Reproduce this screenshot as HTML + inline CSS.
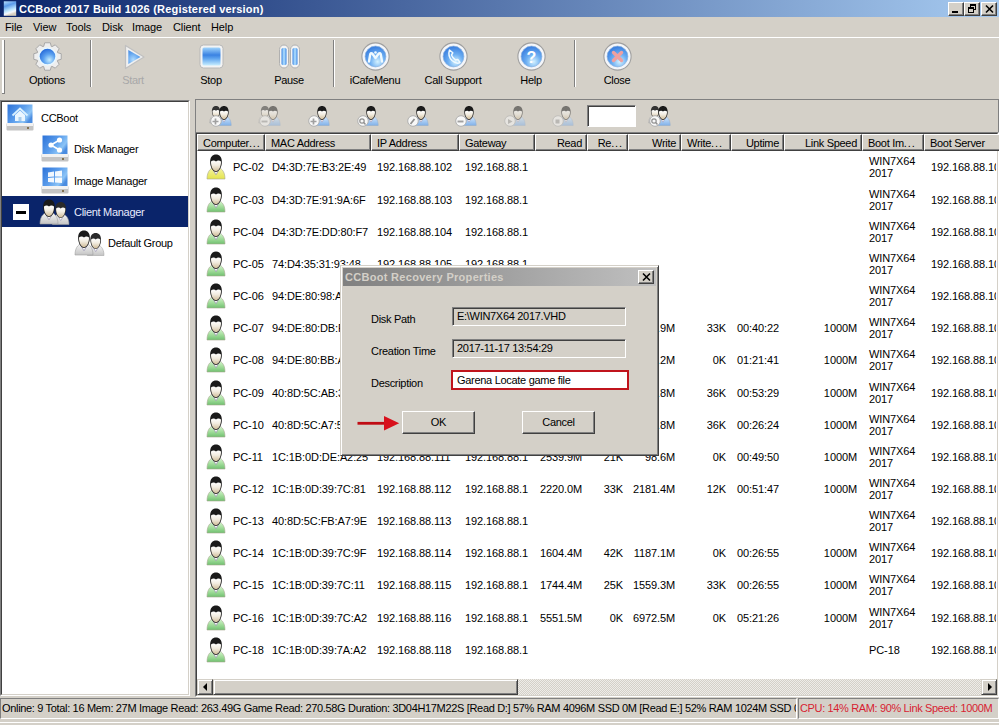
<!DOCTYPE html><html><head><meta charset="utf-8"><style>
*{margin:0;padding:0;box-sizing:border-box}
html,body{width:999px;height:725px;overflow:hidden;background:#D4D0C8;font-family:"Liberation Sans",sans-serif;font-size:11px;color:#000}
.a{position:absolute}
.t{position:absolute;white-space:nowrap;line-height:13px;letter-spacing:-0.3px}
.n{letter-spacing:-0.1px}
.r{text-align:right}
svg{position:absolute;overflow:visible}
.rz{border-top:1px solid #fff;border-left:1px solid #fff;border-right:1px solid #404040;border-bottom:1px solid #404040;box-shadow:inset -1px -1px 0 #808080;background:#D4D0C8}
</style></head><body>
<svg width="0" height="0" style="position:absolute"><defs>
<linearGradient id="gBlue" x1="0" y1="0" x2="0" y2="1"><stop offset="0" stop-color="#A0D4FC"/><stop offset="0.42" stop-color="#3A82E2"/><stop offset="0.6" stop-color="#5CA2EE"/><stop offset="1" stop-color="#C8EEFF"/></linearGradient>
<linearGradient id="gPill" x1="0" y1="0" x2="1" y2="0"><stop offset="0" stop-color="#3C86E4"/><stop offset="0.5" stop-color="#B8E4FF"/><stop offset="1" stop-color="#3C86E4"/></linearGradient>
<radialGradient id="gSphere" cx="0.62" cy="0.72" r="0.75"><stop offset="0" stop-color="#C4ECFF"/><stop offset="0.5" stop-color="#5CA2F0"/><stop offset="1" stop-color="#2468D8"/></radialGradient>
<radialGradient id="gSphereD" cx="0.4" cy="0.7" r="0.8"><stop offset="0" stop-color="#B0DCFF"/><stop offset="0.6" stop-color="#62A4EE"/><stop offset="1" stop-color="#4488E0"/></radialGradient>
<linearGradient id="gFace" x1="0" y1="0" x2="0" y2="1"><stop offset="0" stop-color="#FFFFFF"/><stop offset="0.45" stop-color="#F2ECE0"/><stop offset="1" stop-color="#D0BC98"/></linearGradient>
<linearGradient id="gYel" x1="0" y1="0" x2="0" y2="1"><stop offset="0" stop-color="#F4F4A8"/><stop offset="1" stop-color="#E4E44C"/></linearGradient>
<linearGradient id="gGrn" x1="0" y1="0" x2="0" y2="1"><stop offset="0" stop-color="#E0F6DC"/><stop offset="0.5" stop-color="#A8E0A0"/><stop offset="1" stop-color="#70C070"/></linearGradient>
<linearGradient id="gGry" x1="0" y1="0" x2="0" y2="1"><stop offset="0" stop-color="#F8F8F8"/><stop offset="1" stop-color="#C4C4C4"/></linearGradient>
<linearGradient id="gBlu2" x1="0" y1="0" x2="0" y2="1"><stop offset="0" stop-color="#D8ECFF"/><stop offset="1" stop-color="#80B0E8"/></linearGradient>
<linearGradient id="gDisk" x1="0" y1="0" x2="1" y2="0.6"><stop offset="0" stop-color="#2C72D8"/><stop offset="0.55" stop-color="#5C9EEC"/><stop offset="0.85" stop-color="#8CC4F6"/><stop offset="1" stop-color="#4A8CE0"/></linearGradient>
<linearGradient id="gTitleIco" x1="0" y1="0" x2="0.3" y2="1"><stop offset="0" stop-color="#B8E0FF"/><stop offset="0.35" stop-color="#5A9AEA"/><stop offset="0.7" stop-color="#C0E8FF"/><stop offset="0.85" stop-color="#F4F8FF"/><stop offset="1" stop-color="#D8D0C0"/></linearGradient>
<radialGradient id="gSphere2" cx="0.6" cy="0.75" r="0.8"><stop offset="0" stop-color="#D4F2FF"/><stop offset="0.45" stop-color="#6CAEF2"/><stop offset="1" stop-color="#3076DC"/></radialGradient>
</defs></svg>
<div class="a" style="left:0;top:0;width:999px;height:17px;background:linear-gradient(90deg,#0A246A 0%,#A6CAF0 100%)"></div>
<svg style="left:3px;top:1px" width="14" height="16" viewBox="0 0 14 16"><rect x="0.8" y="0.3" width="12.4" height="14.5" fill="url(#gTitleIco)"/></svg>
<div class="t" style="left:19px;top:3px;color:#fff;font-weight:bold;letter-spacing:0.2px">CCBoot 2017 Build 1026 (Registered version)</div>
<div class="a rz" style="left:948px;top:2px;width:16px;height:14px"><div class="a" style="left:3px;top:8px;width:6px;height:2px;background:#000"></div></div>
<div class="a rz" style="left:964px;top:2px;width:16px;height:14px"><div class="a" style="left:5px;top:1px;width:6px;height:6px;border:1px solid #000;border-top-width:2px"></div><div class="a" style="left:3px;top:4px;width:6px;height:6px;border:1px solid #000;border-top-width:2px;background:#D4D0C8"></div></div>
<div class="a rz" style="left:981px;top:2px;width:16px;height:14px"><svg style="left:3px;top:2px" width="9" height="8" viewBox="0 0 9 8"><path d="M1 0.5L8 7.5M8 0.5L1 7.5" stroke="#000" stroke-width="1.6"/></svg></div>
<div class="t" style="left:5px;top:21px;letter-spacing:-0.1px">File</div>
<div class="t" style="left:33px;top:21px;letter-spacing:-0.1px">View</div>
<div class="t" style="left:66px;top:21px;letter-spacing:-0.1px">Tools</div>
<div class="t" style="left:102px;top:21px;letter-spacing:-0.1px">Disk</div>
<div class="t" style="left:132px;top:21px;letter-spacing:-0.1px">Image</div>
<div class="t" style="left:173px;top:21px;letter-spacing:-0.1px">Client</div>
<div class="t" style="left:211px;top:21px;letter-spacing:-0.1px">Help</div>
<div class="a" style="left:0;top:37px;width:999px;height:1px;background:#fff"></div>
<div class="a" style="left:2px;top:40px;width:2px;height:54px;background:#fff"></div><div class="a" style="left:4px;top:40px;width:1px;height:54px;background:#808080"></div><div class="a" style="left:2px;top:93px;width:3px;height:1px;background:#808080"></div>
<div class="a" style="left:90px;top:40px;width:1px;height:47px;background:#808080"></div><div class="a" style="left:91px;top:40px;width:1px;height:47px;background:#fff"></div>
<div class="a" style="left:333px;top:40px;width:1px;height:47px;background:#808080"></div><div class="a" style="left:334px;top:40px;width:1px;height:47px;background:#fff"></div>
<div class="a" style="left:574px;top:40px;width:1px;height:47px;background:#808080"></div><div class="a" style="left:575px;top:40px;width:1px;height:47px;background:#fff"></div>
<div class="t" style="left:-3px;width:100px;text-align:center;top:74px;color:#000">Options</div>
<div class="t" style="left:83px;width:100px;text-align:center;top:74px;color:#A8A8A8">Start</div>
<div class="t" style="left:161px;width:100px;text-align:center;top:74px;color:#000">Stop</div>
<div class="t" style="left:239px;width:100px;text-align:center;top:74px;color:#000">Pause</div>
<div class="t" style="left:325px;width:100px;text-align:center;top:74px;color:#000">iCafeMenu</div>
<div class="t" style="left:403px;width:100px;text-align:center;top:74px;color:#000">Call Support</div>
<div class="t" style="left:481px;width:100px;text-align:center;top:74px;color:#000">Help</div>
<div class="t" style="left:567px;width:100px;text-align:center;top:74px;color:#000">Close</div>
<svg style="left:0;top:0" width="999" height="100" viewBox="0 0 999 100"><polygon points="43.70,46.39 44.72,42.78 50.28,42.78 51.30,46.39 51.96,46.66 55.24,44.83 59.17,48.76 57.34,52.04 57.61,52.70 61.22,53.72 61.22,59.28 57.61,60.30 57.34,60.96 59.17,64.24 55.24,68.17 51.96,66.34 51.30,66.61 50.28,70.22 44.72,70.22 43.70,66.61 43.04,66.34 39.76,68.17 35.83,64.24 37.66,60.96 37.39,60.30 33.78,59.28 33.78,53.72 37.39,52.70 37.66,52.04 35.83,48.76 39.76,44.83 43.04,46.66" fill="#EEEEEE" stroke="#A8A8A8" stroke-width="1" stroke-linejoin="round"/><circle cx="47.5" cy="56.5" r="9.3" fill="#E8F8FF"/><circle cx="47.5" cy="56.5" r="7.8" fill="url(#gSphere)"/><path d="M125.5 45.5 L144 57 L125.5 68.5 Z" fill="#F0F0F0" stroke="#C0C0C0" stroke-width="1.3" stroke-linejoin="round"/><path d="M128.3 50 L140.5 57 L128.3 64 Z" fill="url(#gSphereD)"/><rect x="200" y="45" width="23" height="23" rx="3.5" fill="#F4F4F4" stroke="#B8B8B8" stroke-width="1"/><rect x="202.5" y="47.5" width="18" height="18" rx="1.5" fill="url(#gBlue)"/><rect x="279.5" y="45" width="9" height="23" rx="4.5" fill="#F4F4F4" stroke="#B0B0B0" stroke-width="1"/><rect x="281.5" y="48" width="5" height="17" rx="1.5" fill="url(#gPill)"/><rect x="290.5" y="45" width="9" height="23" rx="4.5" fill="#F4F4F4" stroke="#B0B0B0" stroke-width="1"/><rect x="292.5" y="48" width="5" height="17" rx="1.5" fill="url(#gPill)"/><circle cx="375.5" cy="56.5" r="13.6" fill="#F4F6FA" stroke="#A0A0A0" stroke-width="1.1"/><circle cx="375.5" cy="56.5" r="10.4" fill="url(#gSphere2)" stroke="#8AB0DC" stroke-width="0.7"/><circle cx="453.5" cy="56.5" r="13.6" fill="#F4F6FA" stroke="#A0A0A0" stroke-width="1.1"/><circle cx="453.5" cy="56.5" r="10.4" fill="url(#gSphere2)" stroke="#8AB0DC" stroke-width="0.7"/><circle cx="531.5" cy="56.5" r="13.6" fill="#F4F6FA" stroke="#A0A0A0" stroke-width="1.1"/><circle cx="531.5" cy="56.5" r="10.4" fill="url(#gSphere2)" stroke="#8AB0DC" stroke-width="0.7"/><circle cx="617.5" cy="56.5" r="13.6" fill="#F4F6FA" stroke="#A0A0A0" stroke-width="1.1"/><circle cx="617.5" cy="56.5" r="10.4" fill="url(#gSphere2)" stroke="#8AB0DC" stroke-width="0.7"/><path d="M369 61.5 L370.3 54 Q371.2 52.3 372.6 54 L375.5 58 L378.4 54 Q379.8 52.3 380.7 54 L382 61.5" fill="none" stroke="#F0FAFF" stroke-width="2.4" stroke-linecap="round" stroke-linejoin="round"/><circle cx="375.5" cy="52.5" r="1.3" fill="#F0FAFF"/><path d="M449.5 50 Q447.5 56 452 60.5 Q456.5 64.5 460 62.5 L457.8 59.5 L455.5 60 Q452.5 58 451.5 55 L452.8 52.8 Z" fill="none" stroke="#F0FAFF" stroke-width="1.5" stroke-linejoin="round"/><text x="531.5" y="62.5" font-family="Liberation Sans" font-weight="bold" font-size="16" fill="#fff" text-anchor="middle">?</text><path d="M613.5 52.5 L621.5 60.5 M621.5 52.5 L613.5 60.5" stroke="#F0A0A0" stroke-width="3.4" stroke-linecap="round"/></svg>
<div class="a" style="left:0;top:100px;width:190px;height:596px;background:#fff;border-top:1px solid #808080;border-left:1px solid #808080;border-right:1px solid #fff;border-bottom:1px solid #fff"></div>
<div class="a" style="left:1px;top:101px;width:188px;height:594px;border-top:1px solid #404040;border-left:1px solid #404040;border-right:1px solid #D4D0C8;border-bottom:1px solid #D4D0C8"></div>
<div class="a" style="left:2px;top:196px;width:186px;height:31px;background:#0A246A"></div>
<div class="a" style="left:13px;top:204px;width:16px;height:16px;background:#fff"></div><div class="a" style="left:16px;top:211px;width:10px;height:3px;background:#000"></div>
<div class="t" style="left:41px;top:112px;color:#000">CCBoot</div>
<div class="t" style="left:74px;top:143px;color:#000">Disk Manager</div>
<div class="t" style="left:74px;top:175px;color:#000">Image Manager</div>
<div class="t" style="left:74px;top:206px;color:#E8ECFF">Client Manager</div>
<div class="t" style="left:108px;top:237px;color:#000">Default Group</div>
<svg style="left:6px;top:103px" width="28" height="28" viewBox="0 0 28 28"><path d="M1.5 1.5 H26.5 V21 H1.5 Z" fill="url(#gDisk)"/><rect x="0.5" y="20" width="27" height="7.5" rx="1" fill="#C4C4C4"/><rect x="1" y="20" width="26" height="3" fill="#F2F2F2"/><rect x="21" y="24" width="2" height="2" fill="#807050"/><path d="M9 18 L9 12 L14 7.5 L19 12 L19 18 Z" fill="#EAF6FF"/><path d="M6.5 12.5 L14 5.5 L21.5 12.5" stroke="#D8F0FF" stroke-width="1.8" fill="none"/><rect x="12.5" y="14" width="3" height="4" fill="#A8CCEC"/></svg>
<svg style="left:41px;top:134px" width="28" height="28" viewBox="0 0 28 28"><path d="M1.5 1.5 H26.5 V21 H1.5 Z" fill="url(#gDisk)"/><rect x="0.5" y="20" width="27" height="7.5" rx="1" fill="#C4C4C4"/><rect x="1" y="20" width="26" height="3" fill="#F2F2F2"/><rect x="21" y="24" width="2" height="2" fill="#807050"/><circle cx="10" cy="11" r="2.6" fill="#fff"/><circle cx="18.5" cy="6" r="2.6" fill="#fff"/><circle cx="18.5" cy="16" r="2.6" fill="#fff"/><path d="M10 11 L18.5 6 M10 11 L18.5 16" stroke="#fff" stroke-width="1.6"/></svg>
<svg style="left:41px;top:166px" width="28" height="28" viewBox="0 0 28 28"><path d="M1.5 1.5 H26.5 V21 H1.5 Z" fill="url(#gDisk)"/><rect x="0.5" y="20" width="27" height="7.5" rx="1" fill="#C4C4C4"/><rect x="1" y="20" width="26" height="3" fill="#F2F2F2"/><rect x="21" y="24" width="2" height="2" fill="#807050"/><path d="M7 6.5 L13 5.5 L13 10.5 L7 11 Z M14 5.5 L21 4.5 L21 10.5 L14 10.5 Z M7 12 L13 11.5 L13 16.5 L7 16 Z M14 11.5 L21 11.5 L21 17 L14 16.5 Z" fill="#fff" opacity="0.92"/></svg>
<svg style="left:39px;top:199px" width="32" height="26" viewBox="0 0 32 26"><g transform="translate(12.5,2.5) scale(0.92)"><path d="M1 25 C1 17 5 13.2 10 13.2 C15 13.2 19 17 19 25 Z" fill="url(#gGry)" stroke="#A0A0A0" stroke-width="0.6"/><path d="M5.8 13.8 L10 20.8 L14.2 13.8 Z" fill="#FAFAFA" stroke="#9890B0" stroke-width="0.7"/><path d="M4.2 9 C3.8 3 6.7 0.6 10 0.6 C13.3 0.6 16.2 3 15.8 9 C15.6 13.5 12.8 18 10 18 C7.2 18 4.4 13.5 4.2 9 Z" fill="#2A2A2A"/><path d="M5 7.6 C6.4 6.2 8.6 6 10 7.6 C11.4 6 13.6 6.2 15 7.6 C15.2 12.5 12.8 17.3 10 17.3 C7.2 17.3 4.8 12.5 5 7.6 Z" fill="url(#gFace)"/></g><g><path d="M1 25 C1 17 5 13.2 10 13.2 C15 13.2 19 17 19 25 Z" fill="url(#gGry)" stroke="#A0A0A0" stroke-width="0.6"/><path d="M5.8 13.8 L10 20.8 L14.2 13.8 Z" fill="#FAFAFA" stroke="#9890B0" stroke-width="0.7"/><path d="M4.2 9 C3.8 3 6.7 0.6 10 0.6 C13.3 0.6 16.2 3 15.8 9 C15.6 13.5 12.8 18 10 18 C7.2 18 4.4 13.5 4.2 9 Z" fill="#1A1A1A"/><path d="M5 7.6 C6.4 6.2 8.6 6 10 7.6 C11.4 6 13.6 6.2 15 7.6 C15.2 12.5 12.8 17.3 10 17.3 C7.2 17.3 4.8 12.5 5 7.6 Z" fill="url(#gFace)"/></g></svg>
<svg style="left:74px;top:230px" width="32" height="26" viewBox="0 0 32 26"><g transform="translate(12.5,2.5) scale(0.92)"><path d="M1 25 C1 17 5 13.2 10 13.2 C15 13.2 19 17 19 25 Z" fill="url(#gGry)" stroke="#A0A0A0" stroke-width="0.6"/><path d="M5.8 13.8 L10 20.8 L14.2 13.8 Z" fill="#FAFAFA" stroke="#9890B0" stroke-width="0.7"/><path d="M4.2 9 C3.8 3 6.7 0.6 10 0.6 C13.3 0.6 16.2 3 15.8 9 C15.6 13.5 12.8 18 10 18 C7.2 18 4.4 13.5 4.2 9 Z" fill="#2A2A2A"/><path d="M5 7.6 C6.4 6.2 8.6 6 10 7.6 C11.4 6 13.6 6.2 15 7.6 C15.2 12.5 12.8 17.3 10 17.3 C7.2 17.3 4.8 12.5 5 7.6 Z" fill="url(#gFace)"/></g><g><path d="M1 25 C1 17 5 13.2 10 13.2 C15 13.2 19 17 19 25 Z" fill="url(#gGry)" stroke="#A0A0A0" stroke-width="0.6"/><path d="M5.8 13.8 L10 20.8 L14.2 13.8 Z" fill="#FAFAFA" stroke="#9890B0" stroke-width="0.7"/><path d="M4.2 9 C3.8 3 6.7 0.6 10 0.6 C13.3 0.6 16.2 3 15.8 9 C15.6 13.5 12.8 18 10 18 C7.2 18 4.4 13.5 4.2 9 Z" fill="#1A1A1A"/><path d="M5 7.6 C6.4 6.2 8.6 6 10 7.6 C11.4 6 13.6 6.2 15 7.6 C15.2 12.5 12.8 17.3 10 17.3 C7.2 17.3 4.8 12.5 5 7.6 Z" fill="url(#gFace)"/></g></svg>
<div class="a" style="left:195px;top:99px;width:804px;height:34px;border-top:1px solid #808080;border-left:1px solid #808080"></div>
<div class="a" style="left:998px;top:99px;width:1px;height:34px;background:#808080"></div>
<div class="a" style="left:195px;top:132px;width:804px;height:565px;background:#fff;border-top:1px solid #808080;border-left:1px solid #808080;border-right:1px solid #fff;border-bottom:1px solid #fff"></div>
<div class="a" style="left:196px;top:133px;width:802px;height:563px;border-top:1px solid #404040;border-left:1px solid #404040;border-right:1px solid #D4D0C8;border-bottom:1px solid #D4D0C8"></div>
<div class="a" style="left:587px;top:105px;width:49px;height:22px;background:#fff;border-top:1px solid #808080;border-left:1px solid #808080;border-right:1px solid #fff;border-bottom:1px solid #fff;box-shadow:inset 1px 1px 0 #404040"></div>
<svg style="left:209px;top:104px" width="24" height="24" viewBox="0 0 24 24"><g ><g transform="translate(0,1.5) scale(0.7)"><path d="M1 25 C1 17 5 13.2 10 13.2 C15 13.2 19 17 19 25 Z" fill="url(#gGry)" stroke="#A0A0A0" stroke-width="0.6"/><path d="M5.8 13.8 L10 20.8 L14.2 13.8 Z" fill="#FAFAFA" stroke="#9890B0" stroke-width="0.7"/><path d="M4.2 9 C3.8 3 6.7 0.6 10 0.6 C13.3 0.6 16.2 3 15.8 9 C15.6 13.5 12.8 18 10 18 C7.2 18 4.4 13.5 4.2 9 Z" fill="#333"/><path d="M5 7.6 C6.4 6.2 8.6 6 10 7.6 C11.4 6 13.6 6.2 15 7.6 C15.2 12.5 12.8 17.3 10 17.3 C7.2 17.3 4.8 12.5 5 7.6 Z" fill="url(#gFace)"/></g><g transform="translate(7,1.5) scale(0.8)"><path d="M1 25 C1 17 5 13.2 10 13.2 C15 13.2 19 17 19 25 Z" fill="url(#gBlu2)" stroke="#90A8C8" stroke-width="0.6"/><path d="M5.8 13.8 L10 20.8 L14.2 13.8 Z" fill="#FAFAFA" stroke="#9890B0" stroke-width="0.7"/><path d="M4.2 9 C3.8 3 6.7 0.6 10 0.6 C13.3 0.6 16.2 3 15.8 9 C15.6 13.5 12.8 18 10 18 C7.2 18 4.4 13.5 4.2 9 Z" fill="#1A1A1A"/><path d="M5 7.6 C6.4 6.2 8.6 6 10 7.6 C11.4 6 13.6 6.2 15 7.6 C15.2 12.5 12.8 17.3 10 17.3 C7.2 17.3 4.8 12.5 5 7.6 Z" fill="url(#gFace)"/></g><circle cx="7" cy="17" r="5.3" fill="#F8F8F8" stroke="#B0B0B0" stroke-width="1"/><path d="M6.5 14.5 V20.5 M3.5 17.5 H9.5" stroke="#A0A0A0" stroke-width="1.7"/></g></svg>
<svg style="left:258px;top:104px" width="24" height="24" viewBox="0 0 24 24"><g opacity="0.5"><g transform="translate(0,1.5) scale(0.7)"><path d="M1 25 C1 17 5 13.2 10 13.2 C15 13.2 19 17 19 25 Z" fill="url(#gGry)" stroke="#A0A0A0" stroke-width="0.6"/><path d="M5.8 13.8 L10 20.8 L14.2 13.8 Z" fill="#FAFAFA" stroke="#9890B0" stroke-width="0.7"/><path d="M4.2 9 C3.8 3 6.7 0.6 10 0.6 C13.3 0.6 16.2 3 15.8 9 C15.6 13.5 12.8 18 10 18 C7.2 18 4.4 13.5 4.2 9 Z" fill="#333"/><path d="M5 7.6 C6.4 6.2 8.6 6 10 7.6 C11.4 6 13.6 6.2 15 7.6 C15.2 12.5 12.8 17.3 10 17.3 C7.2 17.3 4.8 12.5 5 7.6 Z" fill="url(#gFace)"/></g><g transform="translate(7,1.5) scale(0.8)"><path d="M1 25 C1 17 5 13.2 10 13.2 C15 13.2 19 17 19 25 Z" fill="url(#gBlu2)" stroke="#90A8C8" stroke-width="0.6"/><path d="M5.8 13.8 L10 20.8 L14.2 13.8 Z" fill="#FAFAFA" stroke="#9890B0" stroke-width="0.7"/><path d="M4.2 9 C3.8 3 6.7 0.6 10 0.6 C13.3 0.6 16.2 3 15.8 9 C15.6 13.5 12.8 18 10 18 C7.2 18 4.4 13.5 4.2 9 Z" fill="#1A1A1A"/><path d="M5 7.6 C6.4 6.2 8.6 6 10 7.6 C11.4 6 13.6 6.2 15 7.6 C15.2 12.5 12.8 17.3 10 17.3 C7.2 17.3 4.8 12.5 5 7.6 Z" fill="url(#gFace)"/></g><circle cx="7" cy="17" r="5.3" fill="#F8F8F8" stroke="#B0B0B0" stroke-width="1"/><path d="M3.5 17.5 H9.5" stroke="#A0A0A0" stroke-width="1.9"/></g></svg>
<svg style="left:307px;top:104px" width="24" height="24" viewBox="0 0 24 24"><g ><g transform="translate(7,1.5) scale(0.8)"><path d="M1 25 C1 17 5 13.2 10 13.2 C15 13.2 19 17 19 25 Z" fill="url(#gBlu2)" stroke="#90A8C8" stroke-width="0.6"/><path d="M5.8 13.8 L10 20.8 L14.2 13.8 Z" fill="#FAFAFA" stroke="#9890B0" stroke-width="0.7"/><path d="M4.2 9 C3.8 3 6.7 0.6 10 0.6 C13.3 0.6 16.2 3 15.8 9 C15.6 13.5 12.8 18 10 18 C7.2 18 4.4 13.5 4.2 9 Z" fill="#1A1A1A"/><path d="M5 7.6 C6.4 6.2 8.6 6 10 7.6 C11.4 6 13.6 6.2 15 7.6 C15.2 12.5 12.8 17.3 10 17.3 C7.2 17.3 4.8 12.5 5 7.6 Z" fill="url(#gFace)"/></g><circle cx="7" cy="17" r="5.3" fill="#F8F8F8" stroke="#B0B0B0" stroke-width="1"/><path d="M6.5 14.5 V20.5 M3.5 17.5 H9.5" stroke="#A0A0A0" stroke-width="1.7"/></g></svg>
<svg style="left:356px;top:104px" width="24" height="24" viewBox="0 0 24 24"><g ><g transform="translate(7,1.5) scale(0.8)"><path d="M1 25 C1 17 5 13.2 10 13.2 C15 13.2 19 17 19 25 Z" fill="url(#gBlu2)" stroke="#90A8C8" stroke-width="0.6"/><path d="M5.8 13.8 L10 20.8 L14.2 13.8 Z" fill="#FAFAFA" stroke="#9890B0" stroke-width="0.7"/><path d="M4.2 9 C3.8 3 6.7 0.6 10 0.6 C13.3 0.6 16.2 3 15.8 9 C15.6 13.5 12.8 18 10 18 C7.2 18 4.4 13.5 4.2 9 Z" fill="#1A1A1A"/><path d="M5 7.6 C6.4 6.2 8.6 6 10 7.6 C11.4 6 13.6 6.2 15 7.6 C15.2 12.5 12.8 17.3 10 17.3 C7.2 17.3 4.8 12.5 5 7.6 Z" fill="url(#gFace)"/></g><circle cx="7" cy="17" r="5.3" fill="#F8F8F8" stroke="#B0B0B0" stroke-width="1"/><circle cx="6" cy="17" r="2.2" fill="none" stroke="#909090" stroke-width="1.2"/><path d="M7.6 18.6 L9.5 20.5" stroke="#909090" stroke-width="1.4"/></g></svg>
<svg style="left:406px;top:104px" width="24" height="24" viewBox="0 0 24 24"><g ><g transform="translate(7,1.5) scale(0.8)"><path d="M1 25 C1 17 5 13.2 10 13.2 C15 13.2 19 17 19 25 Z" fill="url(#gBlu2)" stroke="#90A8C8" stroke-width="0.6"/><path d="M5.8 13.8 L10 20.8 L14.2 13.8 Z" fill="#FAFAFA" stroke="#9890B0" stroke-width="0.7"/><path d="M4.2 9 C3.8 3 6.7 0.6 10 0.6 C13.3 0.6 16.2 3 15.8 9 C15.6 13.5 12.8 18 10 18 C7.2 18 4.4 13.5 4.2 9 Z" fill="#1A1A1A"/><path d="M5 7.6 C6.4 6.2 8.6 6 10 7.6 C11.4 6 13.6 6.2 15 7.6 C15.2 12.5 12.8 17.3 10 17.3 C7.2 17.3 4.8 12.5 5 7.6 Z" fill="url(#gFace)"/></g><circle cx="7" cy="17" r="5.3" fill="#F8F8F8" stroke="#B0B0B0" stroke-width="1"/><path d="M4.5 20 L8.5 15" stroke="#909090" stroke-width="1.8"/></g></svg>
<svg style="left:454px;top:104px" width="24" height="24" viewBox="0 0 24 24"><g ><g transform="translate(7,1.5) scale(0.8)"><path d="M1 25 C1 17 5 13.2 10 13.2 C15 13.2 19 17 19 25 Z" fill="url(#gBlu2)" stroke="#90A8C8" stroke-width="0.6"/><path d="M5.8 13.8 L10 20.8 L14.2 13.8 Z" fill="#FAFAFA" stroke="#9890B0" stroke-width="0.7"/><path d="M4.2 9 C3.8 3 6.7 0.6 10 0.6 C13.3 0.6 16.2 3 15.8 9 C15.6 13.5 12.8 18 10 18 C7.2 18 4.4 13.5 4.2 9 Z" fill="#1A1A1A"/><path d="M5 7.6 C6.4 6.2 8.6 6 10 7.6 C11.4 6 13.6 6.2 15 7.6 C15.2 12.5 12.8 17.3 10 17.3 C7.2 17.3 4.8 12.5 5 7.6 Z" fill="url(#gFace)"/></g><circle cx="7" cy="17" r="5.3" fill="#F8F8F8" stroke="#B0B0B0" stroke-width="1"/><path d="M3.5 17.5 H9.5" stroke="#A0A0A0" stroke-width="1.9"/></g></svg>
<svg style="left:503px;top:104px" width="24" height="24" viewBox="0 0 24 24"><g opacity="0.5"><g transform="translate(7,1.5) scale(0.8)"><path d="M1 25 C1 17 5 13.2 10 13.2 C15 13.2 19 17 19 25 Z" fill="url(#gBlu2)" stroke="#90A8C8" stroke-width="0.6"/><path d="M5.8 13.8 L10 20.8 L14.2 13.8 Z" fill="#FAFAFA" stroke="#9890B0" stroke-width="0.7"/><path d="M4.2 9 C3.8 3 6.7 0.6 10 0.6 C13.3 0.6 16.2 3 15.8 9 C15.6 13.5 12.8 18 10 18 C7.2 18 4.4 13.5 4.2 9 Z" fill="#1A1A1A"/><path d="M5 7.6 C6.4 6.2 8.6 6 10 7.6 C11.4 6 13.6 6.2 15 7.6 C15.2 12.5 12.8 17.3 10 17.3 C7.2 17.3 4.8 12.5 5 7.6 Z" fill="url(#gFace)"/></g><circle cx="7" cy="17" r="5.3" fill="#F8F8F8" stroke="#B0B0B0" stroke-width="1"/><path d="M5 15 L9.5 17.5 L5 20 Z" fill="#A0A0A0"/></g></svg>
<svg style="left:551px;top:104px" width="24" height="24" viewBox="0 0 24 24"><g opacity="0.5"><g transform="translate(7,1.5) scale(0.8)"><path d="M1 25 C1 17 5 13.2 10 13.2 C15 13.2 19 17 19 25 Z" fill="url(#gBlu2)" stroke="#90A8C8" stroke-width="0.6"/><path d="M5.8 13.8 L10 20.8 L14.2 13.8 Z" fill="#FAFAFA" stroke="#9890B0" stroke-width="0.7"/><path d="M4.2 9 C3.8 3 6.7 0.6 10 0.6 C13.3 0.6 16.2 3 15.8 9 C15.6 13.5 12.8 18 10 18 C7.2 18 4.4 13.5 4.2 9 Z" fill="#1A1A1A"/><path d="M5 7.6 C6.4 6.2 8.6 6 10 7.6 C11.4 6 13.6 6.2 15 7.6 C15.2 12.5 12.8 17.3 10 17.3 C7.2 17.3 4.8 12.5 5 7.6 Z" fill="url(#gFace)"/></g><circle cx="7" cy="17" r="5.3" fill="#F8F8F8" stroke="#B0B0B0" stroke-width="1"/><rect x="4.5" y="15.5" width="4" height="4" fill="#A0A0A0"/></g></svg>
<svg style="left:648px;top:104px" width="24" height="24" viewBox="0 0 24 24"><g ><g transform="translate(0,1.5) scale(0.7)"><path d="M1 25 C1 17 5 13.2 10 13.2 C15 13.2 19 17 19 25 Z" fill="url(#gGry)" stroke="#A0A0A0" stroke-width="0.6"/><path d="M5.8 13.8 L10 20.8 L14.2 13.8 Z" fill="#FAFAFA" stroke="#9890B0" stroke-width="0.7"/><path d="M4.2 9 C3.8 3 6.7 0.6 10 0.6 C13.3 0.6 16.2 3 15.8 9 C15.6 13.5 12.8 18 10 18 C7.2 18 4.4 13.5 4.2 9 Z" fill="#333"/><path d="M5 7.6 C6.4 6.2 8.6 6 10 7.6 C11.4 6 13.6 6.2 15 7.6 C15.2 12.5 12.8 17.3 10 17.3 C7.2 17.3 4.8 12.5 5 7.6 Z" fill="url(#gFace)"/></g><g transform="translate(7,1.5) scale(0.8)"><path d="M1 25 C1 17 5 13.2 10 13.2 C15 13.2 19 17 19 25 Z" fill="url(#gBlu2)" stroke="#90A8C8" stroke-width="0.6"/><path d="M5.8 13.8 L10 20.8 L14.2 13.8 Z" fill="#FAFAFA" stroke="#9890B0" stroke-width="0.7"/><path d="M4.2 9 C3.8 3 6.7 0.6 10 0.6 C13.3 0.6 16.2 3 15.8 9 C15.6 13.5 12.8 18 10 18 C7.2 18 4.4 13.5 4.2 9 Z" fill="#1A1A1A"/><path d="M5 7.6 C6.4 6.2 8.6 6 10 7.6 C11.4 6 13.6 6.2 15 7.6 C15.2 12.5 12.8 17.3 10 17.3 C7.2 17.3 4.8 12.5 5 7.6 Z" fill="url(#gFace)"/></g><circle cx="7" cy="17" r="5.3" fill="#F8F8F8" stroke="#B0B0B0" stroke-width="1"/><circle cx="6" cy="17" r="2.2" fill="none" stroke="#909090" stroke-width="1.2"/><path d="M7.6 18.6 L9.5 20.5" stroke="#909090" stroke-width="1.4"/></g></svg>
<div class="a rz" style="left:197px;top:134px;width:68px;height:17px"></div>
<div class="t" style="left:203px;top:137px">Computer<span style="letter-spacing:0.9px">...</span></div>
<div class="a rz" style="left:265px;top:134px;width:106px;height:17px"></div>
<div class="t" style="left:271px;top:137px">MAC Address</div>
<div class="a rz" style="left:371px;top:134px;width:88px;height:17px"></div>
<div class="t" style="left:377px;top:137px">IP Address</div>
<div class="a rz" style="left:459px;top:134px;width:76px;height:17px"></div>
<div class="t" style="left:465px;top:137px">Gateway</div>
<div class="a rz" style="left:535px;top:134px;width:52px;height:17px"></div>
<div class="t r" style="left:535px;width:47px;top:137px">Read</div>
<div class="a rz" style="left:587px;top:134px;width:41px;height:17px"></div>
<div class="t r" style="left:587px;width:36px;top:137px">Re<span style="letter-spacing:0.9px">...</span></div>
<div class="a rz" style="left:628px;top:134px;width:53px;height:17px"></div>
<div class="t r" style="left:628px;width:48px;top:137px">Write</div>
<div class="a rz" style="left:681px;top:134px;width:50px;height:17px"></div>
<div class="t" style="left:687px;top:137px">Write<span style="letter-spacing:0.9px">...</span></div>
<div class="a rz" style="left:731px;top:134px;width:53px;height:17px"></div>
<div class="t r" style="left:731px;width:48px;top:137px">Uptime</div>
<div class="a rz" style="left:784px;top:134px;width:78px;height:17px"></div>
<div class="t r" style="left:784px;width:73px;top:137px">Link Speed</div>
<div class="a rz" style="left:862px;top:134px;width:62px;height:17px"></div>
<div class="t" style="left:868px;top:137px">Boot Im<span style="letter-spacing:0.9px">...</span></div>
<div class="a rz" style="left:924px;top:134px;width:116px;height:17px"></div>
<div class="t" style="left:930px;top:137px">Boot Server</div>
<div class="a" style="left:197px;top:151px;width:799px;height:528px;overflow:hidden">
<svg style="left:9px;top:3px" width="20" height="26" viewBox="0 0 20 26"><path d="M1 25 C1 17 5 13.2 10 13.2 C15 13.2 19 17 19 25 Z" fill="url(#gYel)" stroke="#A8A890" stroke-width="0.6"/><path d="M5.8 13.8 L10 20.8 L14.2 13.8 Z" fill="#FAFAFA" stroke="#9890B0" stroke-width="0.7"/><path d="M4.2 9 C3.8 3 6.7 0.6 10 0.6 C13.3 0.6 16.2 3 15.8 9 C15.6 13.5 12.8 18 10 18 C7.2 18 4.4 13.5 4.2 9 Z" fill="#1A1A1A"/><path d="M5 7.6 C6.4 6.2 8.6 6 10 7.6 C11.4 6 13.6 6.2 15 7.6 C15.2 12.5 12.8 17.3 10 17.3 C7.2 17.3 4.8 12.5 5 7.6 Z" fill="url(#gFace)"/></svg>
<div class="t n" style="left:36px;top:10px">PC-02</div>
<div class="t n" style="left:75px;top:10px">D4:3D:7E:B3:2E:49</div>
<div class="t n" style="left:180px;top:10px">192.168.88.102</div>
<div class="t n" style="left:268px;top:10px">192.168.88.1</div>
<div class="t n" style="left:672px;top:4px;line-height:12px">WIN7X64<br>2017</div>
<div class="t n" style="left:734px;top:10px">192.168.88.10</div>
<svg style="left:9px;top:36px" width="20" height="26" viewBox="0 0 20 26"><path d="M1 25 C1 17 5 13.2 10 13.2 C15 13.2 19 17 19 25 Z" fill="url(#gGrn)" stroke="#A8A890" stroke-width="0.6"/><path d="M5.8 13.8 L10 20.8 L14.2 13.8 Z" fill="#FAFAFA" stroke="#9890B0" stroke-width="0.7"/><path d="M4.2 9 C3.8 3 6.7 0.6 10 0.6 C13.3 0.6 16.2 3 15.8 9 C15.6 13.5 12.8 18 10 18 C7.2 18 4.4 13.5 4.2 9 Z" fill="#1A1A1A"/><path d="M5 7.6 C6.4 6.2 8.6 6 10 7.6 C11.4 6 13.6 6.2 15 7.6 C15.2 12.5 12.8 17.3 10 17.3 C7.2 17.3 4.8 12.5 5 7.6 Z" fill="url(#gFace)"/></svg>
<div class="t n" style="left:36px;top:43px">PC-03</div>
<div class="t n" style="left:75px;top:43px">D4:3D:7E:91:9A:6F</div>
<div class="t n" style="left:180px;top:43px">192.168.88.103</div>
<div class="t n" style="left:268px;top:43px">192.168.88.1</div>
<div class="t n" style="left:672px;top:37px;line-height:12px">WIN7X64<br>2017</div>
<div class="t n" style="left:734px;top:43px">192.168.88.10</div>
<svg style="left:9px;top:68px" width="20" height="26" viewBox="0 0 20 26"><path d="M1 25 C1 17 5 13.2 10 13.2 C15 13.2 19 17 19 25 Z" fill="url(#gGrn)" stroke="#A8A890" stroke-width="0.6"/><path d="M5.8 13.8 L10 20.8 L14.2 13.8 Z" fill="#FAFAFA" stroke="#9890B0" stroke-width="0.7"/><path d="M4.2 9 C3.8 3 6.7 0.6 10 0.6 C13.3 0.6 16.2 3 15.8 9 C15.6 13.5 12.8 18 10 18 C7.2 18 4.4 13.5 4.2 9 Z" fill="#1A1A1A"/><path d="M5 7.6 C6.4 6.2 8.6 6 10 7.6 C11.4 6 13.6 6.2 15 7.6 C15.2 12.5 12.8 17.3 10 17.3 C7.2 17.3 4.8 12.5 5 7.6 Z" fill="url(#gFace)"/></svg>
<div class="t n" style="left:36px;top:75px">PC-04</div>
<div class="t n" style="left:75px;top:75px">D4:3D:7E:DD:80:F7</div>
<div class="t n" style="left:180px;top:75px">192.168.88.104</div>
<div class="t n" style="left:268px;top:75px">192.168.88.1</div>
<div class="t n" style="left:672px;top:69px;line-height:12px">WIN7X64<br>2017</div>
<div class="t n" style="left:734px;top:75px">192.168.88.10</div>
<svg style="left:9px;top:100px" width="20" height="26" viewBox="0 0 20 26"><path d="M1 25 C1 17 5 13.2 10 13.2 C15 13.2 19 17 19 25 Z" fill="url(#gGrn)" stroke="#A8A890" stroke-width="0.6"/><path d="M5.8 13.8 L10 20.8 L14.2 13.8 Z" fill="#FAFAFA" stroke="#9890B0" stroke-width="0.7"/><path d="M4.2 9 C3.8 3 6.7 0.6 10 0.6 C13.3 0.6 16.2 3 15.8 9 C15.6 13.5 12.8 18 10 18 C7.2 18 4.4 13.5 4.2 9 Z" fill="#1A1A1A"/><path d="M5 7.6 C6.4 6.2 8.6 6 10 7.6 C11.4 6 13.6 6.2 15 7.6 C15.2 12.5 12.8 17.3 10 17.3 C7.2 17.3 4.8 12.5 5 7.6 Z" fill="url(#gFace)"/></svg>
<div class="t n" style="left:36px;top:107px">PC-05</div>
<div class="t n" style="left:75px;top:107px">74:D4:35:31:93:48</div>
<div class="t n" style="left:180px;top:107px">192.168.88.105</div>
<div class="t n" style="left:268px;top:107px">192.168.88.1</div>
<div class="t n" style="left:672px;top:101px;line-height:12px">WIN7X64<br>2017</div>
<div class="t n" style="left:734px;top:107px">192.168.88.10</div>
<svg style="left:9px;top:132px" width="20" height="26" viewBox="0 0 20 26"><path d="M1 25 C1 17 5 13.2 10 13.2 C15 13.2 19 17 19 25 Z" fill="url(#gGrn)" stroke="#A8A890" stroke-width="0.6"/><path d="M5.8 13.8 L10 20.8 L14.2 13.8 Z" fill="#FAFAFA" stroke="#9890B0" stroke-width="0.7"/><path d="M4.2 9 C3.8 3 6.7 0.6 10 0.6 C13.3 0.6 16.2 3 15.8 9 C15.6 13.5 12.8 18 10 18 C7.2 18 4.4 13.5 4.2 9 Z" fill="#1A1A1A"/><path d="M5 7.6 C6.4 6.2 8.6 6 10 7.6 C11.4 6 13.6 6.2 15 7.6 C15.2 12.5 12.8 17.3 10 17.3 C7.2 17.3 4.8 12.5 5 7.6 Z" fill="url(#gFace)"/></svg>
<div class="t n" style="left:36px;top:139px">PC-06</div>
<div class="t n" style="left:75px;top:139px">94:DE:80:98:AC:11</div>
<div class="t n" style="left:180px;top:139px">192.168.88.106</div>
<div class="t n" style="left:268px;top:139px">192.168.88.1</div>
<div class="t n" style="left:672px;top:133px;line-height:12px">WIN7X64<br>2017</div>
<div class="t n" style="left:734px;top:139px">192.168.88.10</div>
<svg style="left:9px;top:164px" width="20" height="26" viewBox="0 0 20 26"><path d="M1 25 C1 17 5 13.2 10 13.2 C15 13.2 19 17 19 25 Z" fill="url(#gGrn)" stroke="#A8A890" stroke-width="0.6"/><path d="M5.8 13.8 L10 20.8 L14.2 13.8 Z" fill="#FAFAFA" stroke="#9890B0" stroke-width="0.7"/><path d="M4.2 9 C3.8 3 6.7 0.6 10 0.6 C13.3 0.6 16.2 3 15.8 9 C15.6 13.5 12.8 18 10 18 C7.2 18 4.4 13.5 4.2 9 Z" fill="#1A1A1A"/><path d="M5 7.6 C6.4 6.2 8.6 6 10 7.6 C11.4 6 13.6 6.2 15 7.6 C15.2 12.5 12.8 17.3 10 17.3 C7.2 17.3 4.8 12.5 5 7.6 Z" fill="url(#gFace)"/></svg>
<div class="t n" style="left:36px;top:171px">PC-07</div>
<div class="t n" style="left:75px;top:171px">94:DE:80:DB:F1:22</div>
<div class="t n" style="left:180px;top:171px">192.168.88.107</div>
<div class="t n" style="left:268px;top:171px">192.168.88.1</div>
<div class="t r n" style="left:305px;width:80px;top:171px">2501.1M</div>
<div class="t r n" style="left:346px;width:80px;top:171px">21K</div>
<div class="t r n" style="left:398px;width:80px;top:171px">98.9M</div>
<div class="t r n" style="left:449px;width:80px;top:171px">33K</div>
<div class="t r n" style="left:502px;width:80px;top:171px">00:40:22</div>
<div class="t r n" style="left:580px;width:80px;top:171px">1000M</div>
<div class="t n" style="left:672px;top:165px;line-height:12px">WIN7X64<br>2017</div>
<div class="t n" style="left:734px;top:171px">192.168.88.10</div>
<svg style="left:9px;top:196px" width="20" height="26" viewBox="0 0 20 26"><path d="M1 25 C1 17 5 13.2 10 13.2 C15 13.2 19 17 19 25 Z" fill="url(#gGrn)" stroke="#A8A890" stroke-width="0.6"/><path d="M5.8 13.8 L10 20.8 L14.2 13.8 Z" fill="#FAFAFA" stroke="#9890B0" stroke-width="0.7"/><path d="M4.2 9 C3.8 3 6.7 0.6 10 0.6 C13.3 0.6 16.2 3 15.8 9 C15.6 13.5 12.8 18 10 18 C7.2 18 4.4 13.5 4.2 9 Z" fill="#1A1A1A"/><path d="M5 7.6 C6.4 6.2 8.6 6 10 7.6 C11.4 6 13.6 6.2 15 7.6 C15.2 12.5 12.8 17.3 10 17.3 C7.2 17.3 4.8 12.5 5 7.6 Z" fill="url(#gFace)"/></svg>
<div class="t n" style="left:36px;top:203px">PC-08</div>
<div class="t n" style="left:75px;top:203px">94:DE:80:BB:A1:33</div>
<div class="t n" style="left:180px;top:203px">192.168.88.108</div>
<div class="t n" style="left:268px;top:203px">192.168.88.1</div>
<div class="t r n" style="left:305px;width:80px;top:203px">2501.1M</div>
<div class="t r n" style="left:346px;width:80px;top:203px">21K</div>
<div class="t r n" style="left:398px;width:80px;top:203px">98.2M</div>
<div class="t r n" style="left:449px;width:80px;top:203px">0K</div>
<div class="t r n" style="left:502px;width:80px;top:203px">01:21:41</div>
<div class="t r n" style="left:580px;width:80px;top:203px">1000M</div>
<div class="t n" style="left:672px;top:197px;line-height:12px">WIN7X64<br>2017</div>
<div class="t n" style="left:734px;top:203px">192.168.88.10</div>
<svg style="left:9px;top:229px" width="20" height="26" viewBox="0 0 20 26"><path d="M1 25 C1 17 5 13.2 10 13.2 C15 13.2 19 17 19 25 Z" fill="url(#gGrn)" stroke="#A8A890" stroke-width="0.6"/><path d="M5.8 13.8 L10 20.8 L14.2 13.8 Z" fill="#FAFAFA" stroke="#9890B0" stroke-width="0.7"/><path d="M4.2 9 C3.8 3 6.7 0.6 10 0.6 C13.3 0.6 16.2 3 15.8 9 C15.6 13.5 12.8 18 10 18 C7.2 18 4.4 13.5 4.2 9 Z" fill="#1A1A1A"/><path d="M5 7.6 C6.4 6.2 8.6 6 10 7.6 C11.4 6 13.6 6.2 15 7.6 C15.2 12.5 12.8 17.3 10 17.3 C7.2 17.3 4.8 12.5 5 7.6 Z" fill="url(#gFace)"/></svg>
<div class="t n" style="left:36px;top:236px">PC-09</div>
<div class="t n" style="left:75px;top:236px">40:8D:5C:AB:31:44</div>
<div class="t n" style="left:180px;top:236px">192.168.88.109</div>
<div class="t n" style="left:268px;top:236px">192.168.88.1</div>
<div class="t r n" style="left:305px;width:80px;top:236px">2501.1M</div>
<div class="t r n" style="left:346px;width:80px;top:236px">21K</div>
<div class="t r n" style="left:398px;width:80px;top:236px">98.8M</div>
<div class="t r n" style="left:449px;width:80px;top:236px">36K</div>
<div class="t r n" style="left:502px;width:80px;top:236px">00:53:29</div>
<div class="t r n" style="left:580px;width:80px;top:236px">1000M</div>
<div class="t n" style="left:672px;top:230px;line-height:12px">WIN7X64<br>2017</div>
<div class="t n" style="left:734px;top:236px">192.168.88.10</div>
<svg style="left:9px;top:261px" width="20" height="26" viewBox="0 0 20 26"><path d="M1 25 C1 17 5 13.2 10 13.2 C15 13.2 19 17 19 25 Z" fill="url(#gGrn)" stroke="#A8A890" stroke-width="0.6"/><path d="M5.8 13.8 L10 20.8 L14.2 13.8 Z" fill="#FAFAFA" stroke="#9890B0" stroke-width="0.7"/><path d="M4.2 9 C3.8 3 6.7 0.6 10 0.6 C13.3 0.6 16.2 3 15.8 9 C15.6 13.5 12.8 18 10 18 C7.2 18 4.4 13.5 4.2 9 Z" fill="#1A1A1A"/><path d="M5 7.6 C6.4 6.2 8.6 6 10 7.6 C11.4 6 13.6 6.2 15 7.6 C15.2 12.5 12.8 17.3 10 17.3 C7.2 17.3 4.8 12.5 5 7.6 Z" fill="url(#gFace)"/></svg>
<div class="t n" style="left:36px;top:268px">PC-10</div>
<div class="t n" style="left:75px;top:268px">40:8D:5C:A7:51:55</div>
<div class="t n" style="left:180px;top:268px">192.168.88.110</div>
<div class="t n" style="left:268px;top:268px">192.168.88.1</div>
<div class="t r n" style="left:305px;width:80px;top:268px">2501.1M</div>
<div class="t r n" style="left:346px;width:80px;top:268px">21K</div>
<div class="t r n" style="left:398px;width:80px;top:268px">98.8M</div>
<div class="t r n" style="left:449px;width:80px;top:268px">36K</div>
<div class="t r n" style="left:502px;width:80px;top:268px">00:26:24</div>
<div class="t r n" style="left:580px;width:80px;top:268px">1000M</div>
<div class="t n" style="left:672px;top:262px;line-height:12px">WIN7X64<br>2017</div>
<div class="t n" style="left:734px;top:268px">192.168.88.10</div>
<svg style="left:9px;top:293px" width="20" height="26" viewBox="0 0 20 26"><path d="M1 25 C1 17 5 13.2 10 13.2 C15 13.2 19 17 19 25 Z" fill="url(#gGrn)" stroke="#A8A890" stroke-width="0.6"/><path d="M5.8 13.8 L10 20.8 L14.2 13.8 Z" fill="#FAFAFA" stroke="#9890B0" stroke-width="0.7"/><path d="M4.2 9 C3.8 3 6.7 0.6 10 0.6 C13.3 0.6 16.2 3 15.8 9 C15.6 13.5 12.8 18 10 18 C7.2 18 4.4 13.5 4.2 9 Z" fill="#1A1A1A"/><path d="M5 7.6 C6.4 6.2 8.6 6 10 7.6 C11.4 6 13.6 6.2 15 7.6 C15.2 12.5 12.8 17.3 10 17.3 C7.2 17.3 4.8 12.5 5 7.6 Z" fill="url(#gFace)"/></svg>
<div class="t n" style="left:36px;top:300px">PC-11</div>
<div class="t n" style="left:75px;top:300px">1C:1B:0D:DE:A2:25</div>
<div class="t n" style="left:180px;top:300px">192.168.88.111</div>
<div class="t n" style="left:268px;top:300px">192.168.88.1</div>
<div class="t r n" style="left:305px;width:80px;top:300px">2539.9M</div>
<div class="t r n" style="left:346px;width:80px;top:300px">21K</div>
<div class="t r n" style="left:398px;width:80px;top:300px">98.6M</div>
<div class="t r n" style="left:449px;width:80px;top:300px">0K</div>
<div class="t r n" style="left:502px;width:80px;top:300px">00:49:50</div>
<div class="t r n" style="left:580px;width:80px;top:300px">1000M</div>
<div class="t n" style="left:672px;top:294px;line-height:12px">WIN7X64<br>2017</div>
<div class="t n" style="left:734px;top:300px">192.168.88.10</div>
<svg style="left:9px;top:325px" width="20" height="26" viewBox="0 0 20 26"><path d="M1 25 C1 17 5 13.2 10 13.2 C15 13.2 19 17 19 25 Z" fill="url(#gGrn)" stroke="#A8A890" stroke-width="0.6"/><path d="M5.8 13.8 L10 20.8 L14.2 13.8 Z" fill="#FAFAFA" stroke="#9890B0" stroke-width="0.7"/><path d="M4.2 9 C3.8 3 6.7 0.6 10 0.6 C13.3 0.6 16.2 3 15.8 9 C15.6 13.5 12.8 18 10 18 C7.2 18 4.4 13.5 4.2 9 Z" fill="#1A1A1A"/><path d="M5 7.6 C6.4 6.2 8.6 6 10 7.6 C11.4 6 13.6 6.2 15 7.6 C15.2 12.5 12.8 17.3 10 17.3 C7.2 17.3 4.8 12.5 5 7.6 Z" fill="url(#gFace)"/></svg>
<div class="t n" style="left:36px;top:332px">PC-12</div>
<div class="t n" style="left:75px;top:332px">1C:1B:0D:39:7C:81</div>
<div class="t n" style="left:180px;top:332px">192.168.88.112</div>
<div class="t n" style="left:268px;top:332px">192.168.88.1</div>
<div class="t r n" style="left:305px;width:80px;top:332px">2220.0M</div>
<div class="t r n" style="left:346px;width:80px;top:332px">33K</div>
<div class="t r n" style="left:398px;width:80px;top:332px">2181.4M</div>
<div class="t r n" style="left:449px;width:80px;top:332px">12K</div>
<div class="t r n" style="left:502px;width:80px;top:332px">00:51:47</div>
<div class="t r n" style="left:580px;width:80px;top:332px">1000M</div>
<div class="t n" style="left:672px;top:326px;line-height:12px">WIN7X64<br>2017</div>
<div class="t n" style="left:734px;top:332px">192.168.88.10</div>
<svg style="left:9px;top:357px" width="20" height="26" viewBox="0 0 20 26"><path d="M1 25 C1 17 5 13.2 10 13.2 C15 13.2 19 17 19 25 Z" fill="url(#gGrn)" stroke="#A8A890" stroke-width="0.6"/><path d="M5.8 13.8 L10 20.8 L14.2 13.8 Z" fill="#FAFAFA" stroke="#9890B0" stroke-width="0.7"/><path d="M4.2 9 C3.8 3 6.7 0.6 10 0.6 C13.3 0.6 16.2 3 15.8 9 C15.6 13.5 12.8 18 10 18 C7.2 18 4.4 13.5 4.2 9 Z" fill="#1A1A1A"/><path d="M5 7.6 C6.4 6.2 8.6 6 10 7.6 C11.4 6 13.6 6.2 15 7.6 C15.2 12.5 12.8 17.3 10 17.3 C7.2 17.3 4.8 12.5 5 7.6 Z" fill="url(#gFace)"/></svg>
<div class="t n" style="left:36px;top:364px">PC-13</div>
<div class="t n" style="left:75px;top:364px">40:8D:5C:FB:A7:9E</div>
<div class="t n" style="left:180px;top:364px">192.168.88.113</div>
<div class="t n" style="left:268px;top:364px">192.168.88.1</div>
<div class="t n" style="left:672px;top:358px;line-height:12px">WIN7X64<br>2017</div>
<div class="t n" style="left:734px;top:364px">192.168.88.10</div>
<svg style="left:9px;top:389px" width="20" height="26" viewBox="0 0 20 26"><path d="M1 25 C1 17 5 13.2 10 13.2 C15 13.2 19 17 19 25 Z" fill="url(#gGrn)" stroke="#A8A890" stroke-width="0.6"/><path d="M5.8 13.8 L10 20.8 L14.2 13.8 Z" fill="#FAFAFA" stroke="#9890B0" stroke-width="0.7"/><path d="M4.2 9 C3.8 3 6.7 0.6 10 0.6 C13.3 0.6 16.2 3 15.8 9 C15.6 13.5 12.8 18 10 18 C7.2 18 4.4 13.5 4.2 9 Z" fill="#1A1A1A"/><path d="M5 7.6 C6.4 6.2 8.6 6 10 7.6 C11.4 6 13.6 6.2 15 7.6 C15.2 12.5 12.8 17.3 10 17.3 C7.2 17.3 4.8 12.5 5 7.6 Z" fill="url(#gFace)"/></svg>
<div class="t n" style="left:36px;top:396px">PC-14</div>
<div class="t n" style="left:75px;top:396px">1C:1B:0D:39:7C:9F</div>
<div class="t n" style="left:180px;top:396px">192.168.88.114</div>
<div class="t n" style="left:268px;top:396px">192.168.88.1</div>
<div class="t r n" style="left:305px;width:80px;top:396px">1604.4M</div>
<div class="t r n" style="left:346px;width:80px;top:396px">42K</div>
<div class="t r n" style="left:398px;width:80px;top:396px">1187.1M</div>
<div class="t r n" style="left:449px;width:80px;top:396px">0K</div>
<div class="t r n" style="left:502px;width:80px;top:396px">00:26:55</div>
<div class="t r n" style="left:580px;width:80px;top:396px">1000M</div>
<div class="t n" style="left:672px;top:390px;line-height:12px">WIN7X64<br>2017</div>
<div class="t n" style="left:734px;top:396px">192.168.88.10</div>
<svg style="left:9px;top:421px" width="20" height="26" viewBox="0 0 20 26"><path d="M1 25 C1 17 5 13.2 10 13.2 C15 13.2 19 17 19 25 Z" fill="url(#gGrn)" stroke="#A8A890" stroke-width="0.6"/><path d="M5.8 13.8 L10 20.8 L14.2 13.8 Z" fill="#FAFAFA" stroke="#9890B0" stroke-width="0.7"/><path d="M4.2 9 C3.8 3 6.7 0.6 10 0.6 C13.3 0.6 16.2 3 15.8 9 C15.6 13.5 12.8 18 10 18 C7.2 18 4.4 13.5 4.2 9 Z" fill="#1A1A1A"/><path d="M5 7.6 C6.4 6.2 8.6 6 10 7.6 C11.4 6 13.6 6.2 15 7.6 C15.2 12.5 12.8 17.3 10 17.3 C7.2 17.3 4.8 12.5 5 7.6 Z" fill="url(#gFace)"/></svg>
<div class="t n" style="left:36px;top:428px">PC-15</div>
<div class="t n" style="left:75px;top:428px">1C:1B:0D:39:7C:11</div>
<div class="t n" style="left:180px;top:428px">192.168.88.115</div>
<div class="t n" style="left:268px;top:428px">192.168.88.1</div>
<div class="t r n" style="left:305px;width:80px;top:428px">1744.4M</div>
<div class="t r n" style="left:346px;width:80px;top:428px">25K</div>
<div class="t r n" style="left:398px;width:80px;top:428px">1559.3M</div>
<div class="t r n" style="left:449px;width:80px;top:428px">33K</div>
<div class="t r n" style="left:502px;width:80px;top:428px">00:26:55</div>
<div class="t r n" style="left:580px;width:80px;top:428px">1000M</div>
<div class="t n" style="left:672px;top:422px;line-height:12px">WIN7X64<br>2017</div>
<div class="t n" style="left:734px;top:428px">192.168.88.10</div>
<svg style="left:9px;top:454px" width="20" height="26" viewBox="0 0 20 26"><path d="M1 25 C1 17 5 13.2 10 13.2 C15 13.2 19 17 19 25 Z" fill="url(#gGrn)" stroke="#A8A890" stroke-width="0.6"/><path d="M5.8 13.8 L10 20.8 L14.2 13.8 Z" fill="#FAFAFA" stroke="#9890B0" stroke-width="0.7"/><path d="M4.2 9 C3.8 3 6.7 0.6 10 0.6 C13.3 0.6 16.2 3 15.8 9 C15.6 13.5 12.8 18 10 18 C7.2 18 4.4 13.5 4.2 9 Z" fill="#1A1A1A"/><path d="M5 7.6 C6.4 6.2 8.6 6 10 7.6 C11.4 6 13.6 6.2 15 7.6 C15.2 12.5 12.8 17.3 10 17.3 C7.2 17.3 4.8 12.5 5 7.6 Z" fill="url(#gFace)"/></svg>
<div class="t n" style="left:36px;top:461px">PC-16</div>
<div class="t n" style="left:75px;top:461px">1C:1B:0D:39:7C:A2</div>
<div class="t n" style="left:180px;top:461px">192.168.88.116</div>
<div class="t n" style="left:268px;top:461px">192.168.88.1</div>
<div class="t r n" style="left:305px;width:80px;top:461px">5551.5M</div>
<div class="t r n" style="left:346px;width:80px;top:461px">0K</div>
<div class="t r n" style="left:398px;width:80px;top:461px">6972.5M</div>
<div class="t r n" style="left:449px;width:80px;top:461px">0K</div>
<div class="t r n" style="left:502px;width:80px;top:461px">05:21:26</div>
<div class="t r n" style="left:580px;width:80px;top:461px">1000M</div>
<div class="t n" style="left:672px;top:455px;line-height:12px">WIN7X64<br>2017</div>
<div class="t n" style="left:734px;top:461px">192.168.88.10</div>
<svg style="left:9px;top:486px" width="20" height="26" viewBox="0 0 20 26"><path d="M1 25 C1 17 5 13.2 10 13.2 C15 13.2 19 17 19 25 Z" fill="url(#gGrn)" stroke="#A8A890" stroke-width="0.6"/><path d="M5.8 13.8 L10 20.8 L14.2 13.8 Z" fill="#FAFAFA" stroke="#9890B0" stroke-width="0.7"/><path d="M4.2 9 C3.8 3 6.7 0.6 10 0.6 C13.3 0.6 16.2 3 15.8 9 C15.6 13.5 12.8 18 10 18 C7.2 18 4.4 13.5 4.2 9 Z" fill="#1A1A1A"/><path d="M5 7.6 C6.4 6.2 8.6 6 10 7.6 C11.4 6 13.6 6.2 15 7.6 C15.2 12.5 12.8 17.3 10 17.3 C7.2 17.3 4.8 12.5 5 7.6 Z" fill="url(#gFace)"/></svg>
<div class="t n" style="left:36px;top:493px">PC-18</div>
<div class="t n" style="left:75px;top:493px">1C:1B:0D:39:7A:A2</div>
<div class="t n" style="left:180px;top:493px">192.168.88.118</div>
<div class="t n" style="left:268px;top:493px">192.168.88.1</div>
<div class="t n" style="left:672px;top:493px">PC-18</div>
<div class="t n" style="left:734px;top:493px">192.168.88.10</div>
</div>
<div class="a" style="left:197px;top:679px;width:800px;height:16px;background-color:#EEECE8;background-image:linear-gradient(45deg,#D4D0C8 25%,transparent 25%,transparent 75%,#D4D0C8 75%),linear-gradient(45deg,#D4D0C8 25%,transparent 25%,transparent 75%,#D4D0C8 75%);background-size:2px 2px;background-position:0 0,1px 1px"></div>
<div class="a" style="left:197px;top:679px;width:16px;height:16px;background:#D4D0C8;border-top:1px solid #D4D0C8;border-left:1px solid #D4D0C8;border-right:1px solid #404040;border-bottom:1px solid #404040;box-shadow:inset 1px 1px 0 #fff,inset -1px -1px 0 #808080"><svg style="left:4px;top:3px" width="6" height="8"><path d="M5 0 L1 4 L5 8Z" fill="#000"/></svg></div>
<div class="a" style="left:213px;top:679px;width:305px;height:16px;background:#D4D0C8;border-top:1px solid #D4D0C8;border-left:1px solid #D4D0C8;border-right:1px solid #404040;border-bottom:1px solid #404040;box-shadow:inset 1px 1px 0 #fff,inset -1px -1px 0 #808080"></div>
<div class="a" style="left:981px;top:679px;width:16px;height:16px;background:#D4D0C8;border-top:1px solid #D4D0C8;border-left:1px solid #D4D0C8;border-right:1px solid #404040;border-bottom:1px solid #404040;box-shadow:inset 1px 1px 0 #fff,inset -1px -1px 0 #808080"><svg style="left:5px;top:3px" width="6" height="8"><path d="M1 0 L5 4 L1 8Z" fill="#000"/></svg></div>
<div class="a" style="left:0;top:698px;width:797px;height:21px;border-top:1px solid #808080;border-left:1px solid #808080;border-right:1px solid #fff;border-bottom:1px solid #fff;overflow:hidden"><div class="t" style="left:1px;top:3px;letter-spacing:-0.33px">Online: 9 Total: 16 Mem: 27M Image Read: 263.49G Game Read: 270.58G Duration: 3D04H17M22S [Read D:] 57% RAM 4096M SSD 0M [Read E:] 52% RAM 1024M SSD 0M</div></div>
<div class="a" style="left:798px;top:698px;width:201px;height:21px;border-top:1px solid #808080;border-left:1px solid #808080;border-right:1px solid #fff;border-bottom:1px solid #fff;overflow:hidden"><div class="t" style="left:1px;top:3px;color:#D81E32;letter-spacing:-0.36px">CPU: 14% RAM: 90% Link Speed: 1000M</div></div>
<div class="a" style="left:0;top:722px;width:999px;height:1px;background:#fff"></div>
<div class="a" style="left:340px;top:265px;width:319px;height:191px;background:#D4D0C8;border-top:1px solid #D4D0C8;border-left:1px solid #D4D0C8;border-right:1px solid #404040;border-bottom:1px solid #404040;box-shadow:inset 1px 1px 0 #fff,inset -1px -1px 0 #808080"></div>
<div class="a" style="left:343px;top:268px;width:313px;height:18px;background:linear-gradient(90deg,#808080,#C0C0C0)"></div>
<div class="t" style="left:345px;top:271px;color:#D4D0C8;font-weight:bold;letter-spacing:0.3px">CCBoot Recovery Properties</div>
<div class="a rz" style="left:638px;top:270px;width:16px;height:14px"><svg style="left:3px;top:2px" width="9" height="8" viewBox="0 0 9 8"><path d="M1 0.5L8 7.5M8 0.5L1 7.5" stroke="#000" stroke-width="1.6"/></svg></div>
<div class="t" style="left:371px;top:313px">Disk Path</div>
<div class="t" style="left:371px;top:345px">Creation Time</div>
<div class="t" style="left:371px;top:377px">Description</div>
<div class="a" style="left:452px;top:307px;width:174px;height:19px;background:#D4D0C8;border-top:1px solid #808080;border-left:1px solid #808080;border-right:1px solid #fff;border-bottom:1px solid #fff;box-shadow:inset 1px 1px 0 #404040"><div class="t" style="left:4px;top:2px">E:\WIN7X64 2017.VHD</div></div>
<div class="a" style="left:452px;top:339px;width:174px;height:19px;background:#D4D0C8;border-top:1px solid #808080;border-left:1px solid #808080;border-right:1px solid #fff;border-bottom:1px solid #fff;box-shadow:inset 1px 1px 0 #404040"><div class="t" style="left:4px;top:2px">2017-11-17 13:54:29</div></div>
<div class="a" style="left:451px;top:370px;width:178px;height:20px;background:#fff;border:2px solid #C0141C"><div class="t" style="left:4px;top:2px">Garena Locate game file</div></div>
<div class="a rz" style="left:402px;top:411px;width:73px;height:23px"><div class="t" style="left:0;width:71px;text-align:center;top:4px">OK</div></div>
<div class="a rz" style="left:522px;top:411px;width:73px;height:23px"><div class="t" style="left:0;width:71px;text-align:center;top:4px">Cancel</div></div>
<svg style="left:356px;top:415px" width="44" height="16" viewBox="0 0 44 16"><path d="M1.5 8.3 H30" stroke="#C00C14" stroke-width="2.8"/><path d="M28 1 L43.2 8.3 L28 15.5 Z" fill="#D8101C"/></svg>
</body></html>
